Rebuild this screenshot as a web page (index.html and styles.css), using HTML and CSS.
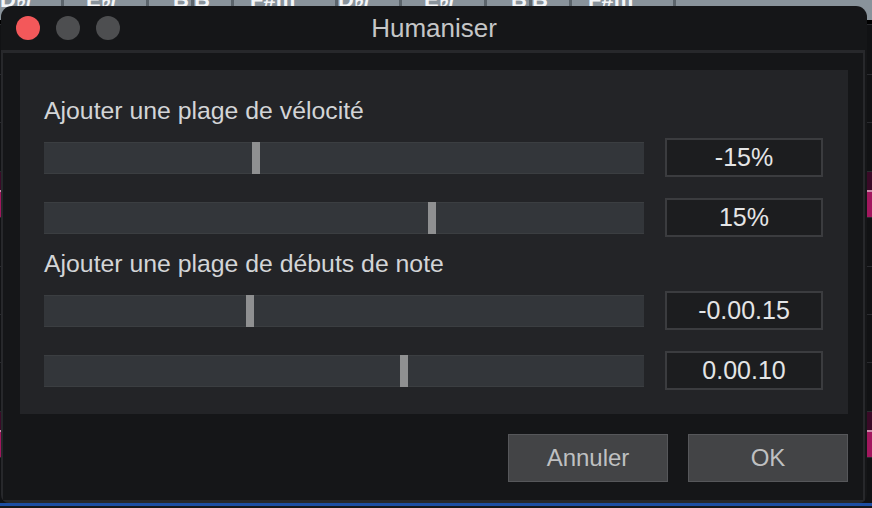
FILE: index.html
```html
<!DOCTYPE html>
<html lang="fr">
<head>
<meta charset="utf-8">
<title>Humaniser</title>
<link rel="stylesheet" href="styles.css">
</head>
<body>
<div class="desktop">
  <div class="chords">
    <span class="chord c1">D♭/</span>
    <span class="chord c2">E♭/</span>
    <span class="chord c3">B</span>
    <span class="chord c4">B</span>
    <span class="chord c5">F#m</span>
    <span class="chord c1">D♭/</span>
    <span class="chord c2">E♭/</span>
    <span class="chord c3">B</span>
    <span class="chord c4">B</span>
    <span class="chord c5">F#m</span>
  </div>
  <div class="lanes">
    <div class="lane h5"></div>
    <div class="lane h50"></div>
    <div class="lane h48"></div>
    <div class="lane h49"></div>
    <div class="lane clip"><div class="clip-head"></div><div class="clip-body"></div></div>
    <div class="lane h49"></div>
    <div class="lane h48"></div>
    <div class="lane h48"></div>
    <div class="lane h49"></div>
    <div class="lane clip"><div class="clip-head"></div><div class="clip-body"></div></div>
    <div class="lane rest"></div>
  </div>
  <div class="timeline"></div>
</div>

<div class="window">
  <div class="titlebar">
    <div class="lights">
      <span class="light close"></span>
      <span class="light"></span>
      <span class="light"></span>
    </div>
    <div class="title">Humaniser</div>
    <div></div>
  </div>
  <div class="frame">
    <div class="panel">
      <section class="group">
        <div class="label">Ajouter une plage de vélocité</div>
        <div class="row">
          <div class="track"><span class="thumb" style="left:208px"></span></div>
          <div class="value">-15%</div>
        </div>
        <div class="row">
          <div class="track"><span class="thumb" style="left:384px"></span></div>
          <div class="value">15%</div>
        </div>
      </section>
      <section class="group">
        <div class="label">Ajouter une plage de débuts de note</div>
        <div class="row">
          <div class="track"><span class="thumb" style="left:202px"></span></div>
          <div class="value">-0.00.15</div>
        </div>
        <div class="row">
          <div class="track"><span class="thumb" style="left:356px"></span></div>
          <div class="value">0.00.10</div>
        </div>
      </section>
    </div>
    <div class="actions">
      <button class="btn">Annuler</button>
      <button class="btn">OK</button>
    </div>
  </div>
</div>
</body>
</html>
```

FILE: styles.css
```css
* {
  box-sizing: border-box;
}

html, body {
  margin: 0;
  padding: 0;
}

body {
  width: 872px;
  height: 508px;
  overflow: hidden;
  background: #111214;
  font-family: "Liberation Sans", Helvetica, Arial, sans-serif;
  position: relative;
}

/* arrangement behind the dialog */
.desktop {
  display: flex;
  flex-direction: column;
  height: 508px;
}

.chords {
  height: 20px;
  background: #89939b;
  display: flex;
  overflow: hidden;
  flex: none;
}

.chord {
  color: #f4f6f8;
  font-size: 22px;
  font-weight: bold;
  line-height: 20px;
  margin-top: -10px;
  padding-left: 4px;
  border-right: 3px solid #5c656c;
  flex: none;
  white-space: nowrap;
  overflow: hidden;
}

.c1 { width: 64px; padding-left: 0; }
.c2 { width: 85px; padding-left: 22px; }
.c3 { width: 45px; padding-left: 24px; }
.c4 { width: 40px; padding-left: 0; }
.c5 { width: 104px; padding-left: 16px; }

.lanes {
  flex: 1;
  display: flex;
  flex-direction: column;
}

.lane {
  border-bottom: 1px solid #2a2b2f;
  flex: none;
}

.h5 { height: 5px; background: #000; }
.h48 { height: 48px; }
.h49 { height: 49px; }
.h50 { height: 50px; }
.rest { flex: 1; border-bottom: none; }

.clip {
  height: 46px;
  display: flex;
  flex-direction: column;
}

.clip-head {
  height: 18px;
  background: #3a0a27;
}

.clip-body {
  flex: 1;
  background: #a2175e;
  border-top: 2px solid #c98aa9;
}

.timeline {
  height: 5px;
  flex: none;
  border-top: 3px solid #1d4ea3;
  background: #17181b;
}

/* dialog */
.window {
  position: absolute;
  left: 1px;
  top: 6px;
  width: 866px;
  height: 497px;
  background: #151618;
  border-radius: 11px 11px 8px 8px;
  display: flex;
  flex-direction: column;
  overflow: hidden;
}

.titlebar {
  height: 44px;
  flex: none;
  display: grid;
  grid-template-columns: 1fr auto 1fr;
  align-items: center;
}

.lights {
  display: flex;
  gap: 16px;
  padding-left: 15px;
}

.light {
  width: 24px;
  height: 24px;
  border-radius: 50%;
  background: #4d4e50;
}

.light.close {
  background: #f3585a;
}

.title {
  color: #c5c6c7;
  font-size: 26px;
  line-height: 44px;
}

.frame {
  flex: 1;
  margin-right: 2px;
  border: 2px solid #27282b;
  border-top-width: 3px;
  border-bottom-width: 3px;
  padding: 17px 15px 0 17px;
  display: flex;
  flex-direction: column;
}

.panel {
  height: 344px;
  background: #232427;
  padding: 27px 25px 0 24px;
  display: flex;
  flex-direction: column;
  gap: 13px;
}

.label {
  color: #d3d5d7;
  font-size: 24.8px;
  line-height: 28px;
  height: 28px;
  white-space: nowrap;
}

.group {
  display: flex;
  flex-direction: column;
  gap: 21px;
}

.group .label {
  margin-bottom: -8px;
}

.row {
  display: flex;
  align-items: center;
  gap: 21px;
  height: 39px;
}

.track {
  flex: 1;
  height: 32px;
  position: relative;
  background: #33363a;
  box-shadow: inset 0 1px #3b3e41, inset 0 -1px #3b3e41;
}

.thumb {
  position: absolute;
  top: 0;
  bottom: 0;
  width: 8px;
  background: #8f9091;
}

.value {
  width: 158px;
  height: 39px;
  flex: none;
  border: 2px solid #3b3c3f;
  background: #1c1d1f;
  color: #e4e5e6;
  font-size: 25px;
  line-height: 35px;
  text-align: center;
}

.actions {
  display: flex;
  justify-content: flex-end;
  gap: 20px;
  margin-top: 20px;
}

.btn {
  width: 160px;
  height: 48px;
  background: #434446;
  border: 1px solid #56575a;
  color: #bfc0c1;
  font-family: inherit;
  font-size: 24px;
  padding: 0;
}
```
